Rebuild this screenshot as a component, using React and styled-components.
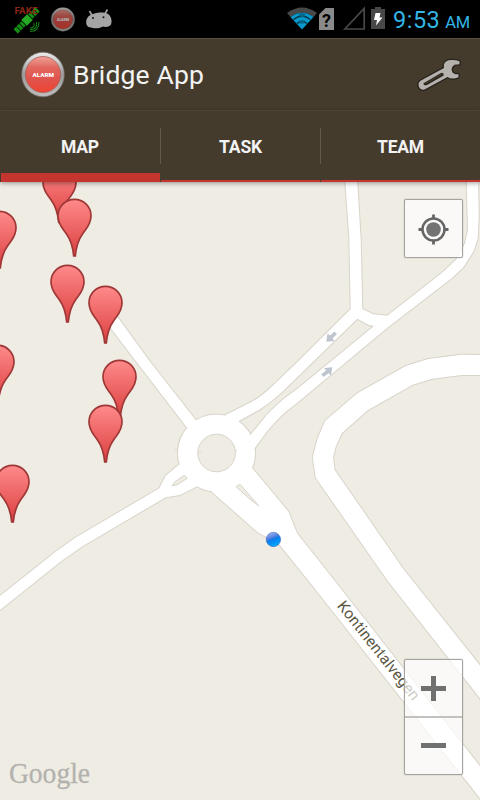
import React from "react";
import styled, { createGlobalStyle } from "styled-components";

const GlobalStyle = createGlobalStyle`
  * { box-sizing: border-box; }
  body { margin: 0; background: #efece3; font-family: Roboto, "Noto Sans", sans-serif; }
`;

const Screen = styled.div`
  width: 480px;
  height: 800px;
  display: flex;
  flex-direction: column;
  overflow: hidden;
`;

const StatusBar = styled.header`
  height: 38px;
  flex: none;
  padding: 0 9px 0 13px;
  background: #000;
  display: flex;
  justify-content: space-between;
`;

const IconStrip = styled.svg`
  display: block;
  flex: none;
  width: ${(p) => p.$width}px;
  height: 38px;
`;

const StatusRight = styled.div`
  display: flex;
`;

const Clock = styled.time`
  width: 78px;
  padding-top: 5px;
  color: #33b5e5;
  font-size: 23.5px;
  line-height: 30px;
  white-space: nowrap;
  letter-spacing: 0.5px;
`;

const Meridiem = styled.span`
  margin-left: 5px;
  font-size: 16.5px;
  letter-spacing: -0.4px;
`;

const ActionBar = styled.div`
  height: 73px;
  flex: none;
  padding: 0 18px 0 21px;
  display: flex;
  align-items: center;
  background: #443b2d;
  border-top: 1px solid #5b4f3e;
  border-bottom: 1px solid #554c3d;
`;

const AppIcon = styled.svg`
  display: block;
  width: 45px;
  height: 47px;
`;

const Title = styled.h1`
  flex: 1;
  margin: 0 0 0 7px;
  color: #f3f3f3;
  font-size: 26.5px;
  font-weight: 400;
  line-height: 34px;
  letter-spacing: 0.17px;
`;

const ActionButton = styled.button`
  border: 0;
  padding: 0;
  background: none;
  svg { display: block; width: 46px; height: 36px; }
`;

const Tabs = styled.nav`
  height: 71px;
  flex: none;
  display: grid;
  grid-template-columns: repeat(3, 160px);
  background: #443b2d;
  position: relative;
  z-index: 1;
  box-shadow: 0 1px 5px rgba(0, 0, 0, 0.4);
`;

const Tab = styled.button`
  display: grid;
  grid-template-rows: 17px 36px 1fr;
  padding: 0;
  border: 0;
  background: none;
  color: #f3f3f3;
  font: 700 17.5px/38px Roboto, sans-serif;
  letter-spacing: -0.2px;
`;

const TabLabel = styled.span`
  grid-row: 2;
  height: 36px;
  border-left: ${(p) => (p.$divided ? "1px solid #62594a" : "0")};
`;

const TabIndicator = styled.span`
  grid-row: 3;
  align-self: end;
  height: ${(p) => (p.$active ? 9 : 2)}px;
  margin-left: 1px;
  background: #c53530;
`;

const MapArea = styled.main`
  flex: 1;
  position: relative;
  overflow: hidden;
  background: #efece3;
`;

const MapCanvas = styled.svg`
  display: block;
  width: 480px;
  height: 618px;
`;

const MapControls = styled.div`
  position: absolute;
  inset: 17px 17px 25px auto;
  width: 59px;
  display: flex;
  flex-direction: column;
  justify-content: space-between;
`;

const ControlGroup = styled.div`
  border: 1px solid #a5a39f;
  border-radius: 2px;
  background: rgba(255, 255, 255, 0.7);
  box-shadow: 0 0 1px rgba(0, 0, 0, 0.5);
`;

const ControlButton = styled.button`
  display: block;
  width: 57px;
  height: ${(p) => p.$height || 57}px;
  padding: 0;
  border: 0;
  border-bottom: ${(p) => (p.$divided ? "2px solid #c2c1bd" : "0")};
  background: none;
  svg { display: block; width: 57px; height: 56px; }
`;

const roads = [
  // northern street down to the fork, then south-west to the roundabout
  "M345 170 L345.3 182 L349.3 237 L350.7 309 L300 359.5 L279.3 379.5 C268 390 260 398 250 402.7 L226 414.7 L215 440 L238.3 421.3 L260 409.3 C268 404 275 398 282 392 L300 374.5 L357.3 318.7 L368.3 324.7 L374 326 L390 318 L387.3 315.7 L373.3 314.3 L362.3 309 L360.7 240 L357.3 182 L357 170Z",
  // north-east street
  "M466.7 170 V182 L468 230 L465 243.3 L456.7 259 L443.3 271.7 L387.3 315.7 L374 326 L300 386.7 L283.3 399.3 C275 407 268 413 263.3 419.3 L250.7 434.7 L240 460 L255.3 447.3 L266.7 431.7 C276 421 283 413 293.3 406 L388.3 327 L451.7 278.3 L463.3 267.3 L473.3 251.7 L477.7 238.3 L478.7 216.7 L478 170Z",
  // north-west street
  "M105 303 L118.3 318 L148.7 360 L195.7 420 L205 440 L186.7 427.3 L135 360 L97 310Z",
  // south-west street
  "M0 596 L55 552.3 L76 537.3 L159.3 488.3 L165.7 475.7 L179.3 464.3 L200 455 L210 480 L196.3 486.7 L180 495 L165.7 497.3 L83.3 545.7 L61.7 560.7 L0 610 L-9 610 V600Z",
  // Kontinentalvegen
  "M216 470 L252.3 468.3 L288.3 511.5 L297 533.3 L334 580 L490 779 V811 L308 580 L278.3 543.3 L258.3 532.7 L211.7 491.7Z",
  // eastern road
  "M490 355 H480 L461 354.7 L428.3 359 L405.7 366 L357.3 393.3 L325 421 L317.7 438.3 L312.7 457.3 L315.7 477.7 L387.7 580.7 L490 711 V678 L403.3 569 L334.7 470 L333 457.3 L335.7 446.7 L341.7 433.3 L367.7 410.3 L412.7 384.7 L432.3 378.7 L461.7 375 H490Z",
];

const islands = [
  "M172 485.7 L176.7 485 L187.3 478.3 L184.3 475.3 L175 481.7Z",
  "M236 486.7 L240 484.3 L259 506 L250 499.3Z",
];

const pins = [
  [59.5, 165], [74.5, 198.5], [-0.5, 210.5], [67.5, 264.5], [105.5, 285.5],
  [-2.5, 344.5], [119.5, 359.5], [105.5, 404.5], [12.5, 464.5],
];

const AlarmDrawing = ({ id }) => (
  <>
    <defs>
      <linearGradient id={`${id}-rim`} x2="0" y2="1">
        <stop stopColor="#ededed" /><stop offset=".5" stopColor="#9b9b9b" /><stop offset="1" stopColor="#bdbdbd" />
      </linearGradient>
      <linearGradient id={`${id}-face`} x2="0" y2="1">
        <stop stopColor="#f0a196" /><stop offset=".3" stopColor="#e2685f" /><stop offset=".65" stopColor="#e0524b" /><stop offset="1" stopColor="#f04432" />
      </linearGradient>
    </defs>
    <ellipse cx="22" cy="23.5" rx="21.3" ry="22.3" fill={`url(#${id}-rim)`} stroke="#77736d" strokeWidth=".7" />
    <ellipse cx="22" cy="23.5" rx="17.6" ry="18" fill={`url(#${id}-face)`} stroke="#a5605a" strokeWidth=".8" />
    <text x="11.5" y="26" textLength="21.5" lengthAdjust="spacingAndGlyphs" fontSize="5.6" fontWeight="900" fill="#fff">ALARM</text>
  </>
);

const NotificationIcons = () => (
  <IconStrip $width={110} viewBox="13 0 110 38">
    <g transform="translate(27 20) rotate(-45)">
      <path fill="#159015" d="M-16-3h12v6h-12zM4-3h11v6H4z" />
      <path fill="#25a925" d="M-4.500-4h9v8h-9z" />
      <path stroke="#042504" d="M-12-3.500v7M-8-3.500v7M-4.500-4v8M4.500-4v8M8-3.500v7M12-3.500v7" />
    </g>
    <path d="M34 23c1 3-1 5-4 5M36.500 22c1 5-2 8-6.500 7.500M39 22c0 6-3 9.500-9 9.500" fill="none" stroke="#148014" strokeWidth="1.100" />
    <text x="14.500" y="14" textLength="23" lengthAdjust="spacingAndGlyphs" fontSize="8.500" fontWeight="700" fill="#8b2415">FAKE</text>
    <g opacity=".7" transform="translate(50.700 6.800) scale(.555 .535)"><AlarmDrawing id="small" /></g>
    <g fill="#a5a5a5">
      <path d="M89 16C93 12.500 103 11.500 107 13.500C111 15 112.500 21 111 24.500C109.500 27 105 27.500 103 26.500C99 29 93 28.500 91 27.500C87 27.500 86 24 86.200 21.500C86.500 18.500 87.500 17.500 89 16Z" />
      <path d="M89.500 11l3 5M107.500 9.500l-3 5" stroke="#a5a5a5" strokeWidth="1.600" />
    </g>
    <circle cx="93" cy="18" r="1" fill="#151515" /><circle cx="103.500" cy="17.300" r="1" fill="#151515" />
  </IconStrip>
);

const SignalIcons = () => (
  <IconStrip $width={106} viewBox="287 0 106 38">
    <path d="M287 13Q302 2 317 13L313.500 17Q302 8.500 290.500 17Z" fill="#484848" />
    <path d="M290.500 17Q302 8.500 313.500 17L302 29.500Z" fill="#0799cc" />
    <path d="M293.500 19.500Q302 13 310.500 19.500M297 23.500Q302 19.500 307 23.500" fill="none" stroke="#023445" strokeWidth="1.500" />
    <path d="M298.500 13.700q3.500-1 7 0l-1 3h-5zM299.500 20.500l2.500-.5 2.500.5-.5 3h-4z" fill="#046788" />
    <path d="M319 14.500L325.500 8H334V30H319Z" fill="#8a8a8a" />
    <text x="326.600" y="27" textAnchor="middle" fontSize="18" fontWeight="700" fill="#000">?</text>
    <path d="M344.800 29L364.200 8.500V29Z" fill="none" stroke="#484848" strokeWidth="1.700" />
    <path d="M371 9H375V7H381V9H385V29H371Z" fill="#484848" />
    <path d="M375.500 13H380.500L379.500 17.500H382.500L376 25.500L377 20H374Z" fill="#fff" />
  </IconStrip>
);

const WrenchIcon = () => (
  <svg viewBox="415 56 46 36">
    <path fillRule="evenodd" d="M458.500 60.300Q454 58.600 447.500 59.300Q441.500 61.500 443 67L419.500 79.800Q416.500 82 418 86Q419.500 89.500 423.500 88.500L446.500 76Q451 79 457.500 76.300V73.300Q452 73.500 451 70.500Q449.500 66.500 453.500 63.800L458.500 63.200ZM422.500 82.200L439.500 72.200Q443 70.800 442.700 74.500L426 84Q422 85.200 422.500 82.200Z" fill="#b5b2ad" stroke="#28231c" strokeWidth="2.600" strokeLinejoin="round" paintOrder="stroke" />
    <path d="M424 82.300L440 73.200" fill="none" stroke="#443b2d" strokeWidth="1" strokeLinecap="round" />
  </svg>
);

const TargetIcon = () => (
  <svg viewBox="0 0 57 56">
    <circle cx="28.500" cy="28.500" r="11" fill="none" stroke="#666" strokeWidth="2.500" />
    <circle cx="28.500" cy="28.500" r="7.300" fill="#737373" />
    <path d="M28.500 13.500v4.500M28.500 39v4.500M13.500 28.500H18M39 28.500h4.500" stroke="#666" strokeWidth="2.800" />
  </svg>
);

const StreetMap = () => (
  <MapCanvas viewBox="0 182 480 618">
    <defs>
      <linearGradient id="pin" x2="0" y2="1"><stop stopColor="#ff8a8a" /><stop offset=".65" stopColor="#e85a5a" /><stop offset="1" stopColor="#da3d3d" /></linearGradient>
      <linearGradient id="dot" x1=".2" y1="0" x2=".6" y2="1"><stop stopColor="#a9baf0" /><stop offset=".42" stopColor="#4a7bdf" /><stop offset=".5" stopColor="#087cec" /><stop offset="1" stopColor="#00aaff" /></linearGradient>
    </defs>
    <g fill="#fff" stroke="#d8d4ca" strokeWidth="2">
      {roads.map((d) => <path key={d} d={d} />)}
      <circle cx="216.500" cy="453" r="38.600" />
    </g>
    <g fill="#fff">
      {roads.map((d) => <path key={d} d={d} />)}
      <circle cx="216.500" cy="453" r="38.600" />
    </g>
    <g fill="#efece3" stroke="#d8d4ca">
      <circle cx="216.600" cy="453" r="18.800" />
      {islands.map((d) => <path key={d} d={d} />)}
    </g>
    <path d="M174 449.500h3M199 452.500h3M234 450.500h3" stroke="#e2dfd6" />
    <g fill="#bec5ce">
      <path d="M326.300 341.800L327.500 333.500L330 335.500L334.500 331.500L337 334L332.500 338.500L334.800 341Z" />
      <path d="M332.300 367.300L331 375.500L328.500 373.200L323.500 377L321.200 374.300L326 370.500L324 368Z" />
    </g>
    <text transform="translate(336.600 606) rotate(51.500)" fontFamily="Roboto, sans-serif" fontSize="15.500" textLength="122" fill="#5b5544" stroke="#fff" strokeWidth="2" paintOrder="stroke">Kontinentalvegen</text>
    {pins.map(([x, y]) => (
      <path key={`${x} ${y}`} transform={`translate(${x} ${y})`} d="M-.8 57.500C-1.600 49 -4 41 -8 35.500C-11.500 30-16.500 26.500-16.500 17.300A16.500 16.500 0 0 1 16.500 17.300C16.500 26.500 11.500 30 8 35.500C4 41 1.600 49 .8 57.500Z" fill="url(#pin)" stroke="#a03737" strokeWidth="1.700" />
    ))}
    <circle cx="273.400" cy="539.500" r="7.200" fill="url(#dot)" stroke="#2858b5" strokeWidth=".5" />
    <text x="9" y="782.500" fontFamily="'Liberation Serif', serif" fontSize="30" textLength="81" lengthAdjust="spacingAndGlyphs" fill="#b3b2ae" stroke="#b3b2ae" strokeWidth=".3">Google</text>
  </MapCanvas>
);

export default function App() {
  return (
    <Screen>
      <GlobalStyle />
      <StatusBar>
        <NotificationIcons />
        <StatusRight>
          <SignalIcons />
          <Clock>9:53<Meridiem>AM</Meridiem></Clock>
        </StatusRight>
      </StatusBar>
      <ActionBar>
        <AppIcon viewBox="0 0 45 47"><AlarmDrawing id="app" /></AppIcon>
        <Title>Bridge App</Title>
        <ActionButton aria-label="Settings"><WrenchIcon /></ActionButton>
      </ActionBar>
      <Tabs>
        {["MAP", "TASK", "TEAM"].map((name, i) => (
          <Tab key={name}>
            <TabLabel $divided={i > 0}>{name}</TabLabel>
            <TabIndicator $active={i === 0} />
          </Tab>
        ))}
      </Tabs>
      <MapArea>
        <StreetMap />
        <MapControls>
          <ControlGroup>
            <ControlButton aria-label="My location"><TargetIcon /></ControlButton>
          </ControlGroup>
          <ControlGroup>
            <ControlButton $divided $height={58} aria-label="Zoom in">
              <svg viewBox="0 0 57 56"><path d="M16 28.500H41M28.500 16V41" stroke="#707070" strokeWidth="5" /></svg>
            </ControlButton>
            <ControlButton $height={56} aria-label="Zoom out">
              <svg viewBox="0 0 57 56"><path d="M16 27.500H41" stroke="#707070" strokeWidth="5" /></svg>
            </ControlButton>
          </ControlGroup>
        </MapControls>
      </MapArea>
    </Screen>
  );
}
